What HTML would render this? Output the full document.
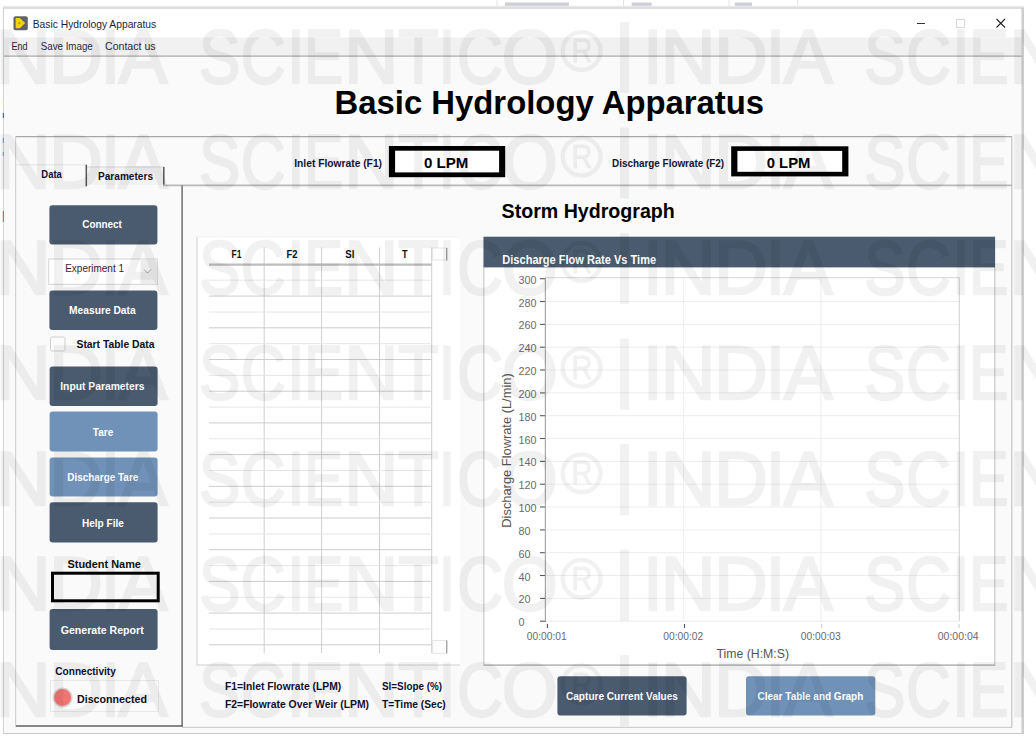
<!DOCTYPE html>
<html><head><meta charset="utf-8"><title>Basic Hydrology Apparatus</title>
<style>html,body{margin:0;padding:0;background:#fff;}svg{display:block;font-family:"Liberation Sans", sans-serif;}</style></head>
<body><svg width="1036" height="746" viewBox="0 0 1036 746">
<rect x="0.00" y="0.00" width="1036.00" height="746.00" fill="#ffffff" />
<rect x="505.00" y="2.50" width="64.00" height="4.00" fill="#cdd0da" />
<rect x="631.60" y="2.50" width="20.00" height="4.00" fill="#cdd0da" />
<rect x="734.70" y="2.50" width="17.30" height="4.00" fill="#cdd0da" />
<line x1="497" y1="0" x2="497" y2="9" stroke="#e2e2e2" stroke-width="1" />
<line x1="623.5" y1="0" x2="623.5" y2="9" stroke="#e2e2e2" stroke-width="1" />
<line x1="729" y1="0" x2="729" y2="9" stroke="#e2e2e2" stroke-width="1" />
<line x1="797.6" y1="0" x2="797.6" y2="9" stroke="#e2e2e2" stroke-width="1" />
<rect x="3.00" y="5.80" width="1021.00" height="3.70" fill="#ebebeb" />
<rect x="3.00" y="6.80" width="1021.00" height="2.00" fill="#dedede" />
<rect x="3.00" y="9.00" width="1020.00" height="725.00" fill="#ffffff" />
<line x1="3.5" y1="8" x2="3.5" y2="734" stroke="#d4d4d4" stroke-width="1.2" />
<line x1="1022.5" y1="8" x2="1022.5" y2="734" stroke="#cdcdcd" stroke-width="3" />
<line x1="3" y1="733.5" x2="1024" y2="733.5" stroke="#c9c9c9" stroke-width="1.2" />
<rect x="2.80" y="101.00" width="1.60" height="5.00" fill="#e8e4a0" />
<rect x="2.80" y="113.00" width="1.60" height="5.00" fill="#4a6a9a" />
<rect x="2.80" y="138.00" width="1.60" height="5.00" fill="#7aa0d0" />
<rect x="2.80" y="152.00" width="1.60" height="4.00" fill="#7aa0d0" />
<rect x="2.80" y="211.00" width="1.60" height="11.00" fill="#b07060" />
<rect x="4.00" y="9.20" width="1017.50" height="28.30" fill="#ffffff" />
<rect x="13.5" y="16.2" width="14.3" height="14" rx="2" fill="#616168"/>
<path d="M15.6 18 L19.8 18 L25.2 23.1 L19.8 28.2 L15.6 28.2 Z" fill="#f2d300"/>
<circle cx="19.3" cy="23.1" r="1.1" fill="#b09a10"/>
<text x="32.72" y="27.8" font-size="11.5" font-weight="normal" fill="#1d1d3a" textLength="123.50" lengthAdjust="spacingAndGlyphs" >Basic Hydrology Apparatus</text>
<line x1="917" y1="23.5" x2="925" y2="23.5" stroke="#333" stroke-width="1" />
<rect x="956.5" y="19.5" width="8" height="8" fill="none" stroke="#d8d8d8" stroke-width="1"/>
<line x1="996.5" y1="19" x2="1005" y2="27.5" stroke="#222" stroke-width="1.1" />
<line x1="1005" y1="19" x2="996.5" y2="27.5" stroke="#222" stroke-width="1.1" />
<rect x="4.00" y="37.50" width="1017.50" height="18.50" fill="#f1f1f1" />
<text x="11.56" y="49.8" font-size="11.5" font-weight="normal" fill="#3a1a3a" textLength="16.10" lengthAdjust="spacingAndGlyphs" >End</text>
<text x="40.72" y="49.8" font-size="11.5" font-weight="normal" fill="#2a2a3a" textLength="52.06" lengthAdjust="spacingAndGlyphs" >Save Image</text>
<text x="105.00" y="49.8" font-size="11.5" font-weight="normal" fill="#2a2a3a" textLength="50.56" lengthAdjust="spacingAndGlyphs" >Contact us</text>
<line x1="4" y1="56.1" x2="1021.5" y2="56.1" stroke="#aaaaaa" stroke-width="1.3" />
<rect x="4.00" y="57.00" width="1017.50" height="676.00" fill="#fafafa" />
<text x="334.54" y="113.8" font-size="32.5" font-weight="bold" fill="#000" textLength="429.58" lengthAdjust="spacingAndGlyphs" >Basic Hydrology Apparatus</text>
<line x1="15.5" y1="136.7" x2="1012" y2="136.7" stroke="#a8a8a8" stroke-width="1.3" />
<line x1="15.6" y1="136.7" x2="15.6" y2="727" stroke="#d2d2d2" stroke-width="1.2" />
<line x1="1011.8" y1="136.7" x2="1011.8" y2="727.5" stroke="#c4c4c4" stroke-width="1.2" />
<line x1="182" y1="727.3" x2="1012" y2="727.3" stroke="#cfcfcf" stroke-width="1.2" />
<text x="294.22" y="167.4" font-size="10" font-weight="bold" fill="#141438" textLength="87.78" lengthAdjust="spacingAndGlyphs" >Inlet Flowrate (F1)</text>
<rect x="388.90" y="146.00" width="116.30" height="31.20" fill="#000" />
<rect x="395.10" y="150.70" width="104.00" height="21.70" fill="#fff" />
<text x="424.00" y="168.3" font-size="15.5" font-weight="bold" fill="#000" textLength="44.44" lengthAdjust="spacingAndGlyphs" >0 LPM</text>
<text x="612.00" y="167.4" font-size="10" font-weight="bold" fill="#141438" textLength="112.16" lengthAdjust="spacingAndGlyphs" >Discharge Flowrate (F2)</text>
<rect x="731.20" y="146.30" width="117.20" height="30.10" fill="#000" />
<rect x="737.40" y="150.90" width="104.80" height="20.90" fill="#fff" />
<text x="766.72" y="168.3" font-size="15.5" font-weight="bold" fill="#000" textLength="43.72" lengthAdjust="spacingAndGlyphs" >0 LPM</text>
<line x1="15.5" y1="164.8" x2="86" y2="164.8" stroke="#e4e4e4" stroke-width="1" />
<rect x="86.50" y="167.00" width="77.00" height="18.00" fill="#f3f3f3" />
<line x1="86" y1="167" x2="164" y2="167" stroke="#d6d6d6" stroke-width="1" />
<line x1="86.3" y1="164.7" x2="86.3" y2="186.3" stroke="#555" stroke-width="1.5" />
<line x1="163.8" y1="167" x2="163.8" y2="185.5" stroke="#555" stroke-width="1.5" />
<text x="41.34" y="177.6" font-size="10.5" font-weight="bold" fill="#101030" textLength="20.54" lengthAdjust="spacingAndGlyphs" >Data</text>
<text x="98.00" y="180.0" font-size="10.5" font-weight="bold" fill="#101030" textLength="55.00" lengthAdjust="spacingAndGlyphs" >Parameters</text>
<line x1="163" y1="185.3" x2="1012" y2="185.3" stroke="#b8b8b8" stroke-width="1.8" />
<line x1="182.1" y1="185.5" x2="182.1" y2="726.5" stroke="#707070" stroke-width="1.5" />
<line x1="16" y1="725.9" x2="182.8" y2="725.9" stroke="#606060" stroke-width="1.5" />
<rect x="49.4" y="205.2" width="108.0" height="39.3" rx="3" fill="#4a5a6f"/>
<text x="82.22" y="228.4" font-size="11" font-weight="bold" fill="#ffffff" textLength="39.66" lengthAdjust="spacingAndGlyphs" >Connect</text>
<rect x="48.7" y="259" width="108.6" height="25.3" fill="#ffffff" stroke="#d4d4d4" stroke-width="1"/>
<rect x="140.50" y="259.50" width="16.50" height="24.50" fill="#ececec" />
<path d="M144 269.5 L147.5 273 L151 269.5" fill="none" stroke="#9a9a9a" stroke-width="1"/>
<text x="65.22" y="272.4" font-size="11" font-weight="normal" fill="#3a1a3a" textLength="58.78" lengthAdjust="spacingAndGlyphs" >Experiment 1</text>
<rect x="49.4" y="290.6" width="108.0" height="39.4" rx="3" fill="#4a5a6f"/>
<text x="69.06" y="314.0" font-size="11" font-weight="bold" fill="#ffffff" textLength="66.60" lengthAdjust="spacingAndGlyphs" >Measure Data</text>
<rect x="50.5" y="337" width="14.5" height="14" rx="1.5" fill="#fbfbfb" stroke="#d0d0d0" stroke-width="1"/>
<text x="76.50" y="348.0" font-size="11" font-weight="bold" fill="#101010" textLength="78.00" lengthAdjust="spacingAndGlyphs" >Start Table Data</text>
<rect x="49.6" y="366.5" width="108.0" height="39.5" rx="3" fill="#4a5a6f"/>
<text x="60.22" y="390.0" font-size="11" font-weight="bold" fill="#ffffff" textLength="84.28" lengthAdjust="spacingAndGlyphs" >Input Parameters</text>
<rect x="49.6" y="411.6" width="108.0" height="39.8" rx="3" fill="#7192b8"/>
<text x="92.84" y="435.5" font-size="11" font-weight="bold" fill="#ffffff" textLength="20.38" lengthAdjust="spacingAndGlyphs" >Tare</text>
<rect x="49.6" y="457.5" width="108.0" height="39.0" rx="3" fill="#7192b8"/>
<text x="67.34" y="481.0" font-size="11" font-weight="bold" fill="#ffffff" textLength="70.94" lengthAdjust="spacingAndGlyphs" >Discharge Tare</text>
<rect x="49.6" y="502.3" width="108.0" height="40.1" rx="3" fill="#4a5a6f"/>
<text x="82.00" y="526.5" font-size="11" font-weight="bold" fill="#ffffff" textLength="41.78" lengthAdjust="spacingAndGlyphs" >Help File</text>
<text x="67.50" y="568.0" font-size="11" font-weight="bold" fill="#101010" textLength="73.44" lengthAdjust="spacingAndGlyphs" >Student  Name</text>
<rect x="52.5" y="573.2" width="105.7" height="27.6" fill="#fafafa" stroke="#000" stroke-width="3"/>
<rect x="49.6" y="609" width="108.0" height="41.0" rx="3" fill="#4a5a6f"/>
<text x="60.72" y="633.5" font-size="11" font-weight="bold" fill="#ffffff" textLength="83.00" lengthAdjust="spacingAndGlyphs" >Generate Report</text>
<text x="55.34" y="675.0" font-size="11" font-weight="bold" fill="#101030" textLength="60.44" lengthAdjust="spacingAndGlyphs" >Connectivity</text>
<rect x="50.5" y="680.5" width="108" height="31" fill="none" stroke="#e8e8e8" stroke-width="1"/>
<circle cx="62.6" cy="697.6" r="9.3" fill="#f07474" stroke="#d6d6d6" stroke-width="1.6"/>
<text x="77.00" y="702.8" font-size="11.5" font-weight="bold" fill="#101020" textLength="70.00" lengthAdjust="spacingAndGlyphs" >Disconnected</text>
<rect x="196.60" y="236.60" width="263.40" height="428.70" fill="#ffffff" />
<line x1="197" y1="236.6" x2="197" y2="665.3" stroke="#cfcfcf" stroke-width="1" />
<line x1="196.6" y1="236.9" x2="460" y2="236.9" stroke="#f0f0f0" stroke-width="1" />
<line x1="196.6" y1="665" x2="460" y2="665" stroke="#d0d0d0" stroke-width="1.2" />
<line x1="264.2" y1="247.5" x2="264.2" y2="653.3" stroke="#cfcfcf" stroke-width="1" />
<line x1="321.6" y1="247.5" x2="321.6" y2="653.3" stroke="#cfcfcf" stroke-width="1" />
<line x1="379.5" y1="247.5" x2="379.5" y2="653.3" stroke="#cfcfcf" stroke-width="1" />
<line x1="431.7" y1="247.5" x2="431.7" y2="653.3" stroke="#cfcfcf" stroke-width="1" />
<line x1="209" y1="264.6" x2="431.7" y2="264.6" stroke="#bdbdbd" stroke-width="2.2" />
<line x1="209" y1="280.2" x2="431.7" y2="280.2" stroke="#e6e6e6" stroke-width="1" />
<line x1="209" y1="296.1" x2="431.7" y2="296.1" stroke="#cdcdcd" stroke-width="1" />
<line x1="209" y1="312.0" x2="431.7" y2="312.0" stroke="#e6e6e6" stroke-width="1" />
<line x1="209" y1="327.8" x2="431.7" y2="327.8" stroke="#cdcdcd" stroke-width="1" />
<line x1="209" y1="343.7" x2="431.7" y2="343.7" stroke="#e6e6e6" stroke-width="1" />
<line x1="209" y1="359.5" x2="431.7" y2="359.5" stroke="#cdcdcd" stroke-width="1" />
<line x1="209" y1="375.4" x2="431.7" y2="375.4" stroke="#e6e6e6" stroke-width="1" />
<line x1="209" y1="391.2" x2="431.7" y2="391.2" stroke="#cdcdcd" stroke-width="1" />
<line x1="209" y1="407.1" x2="431.7" y2="407.1" stroke="#e6e6e6" stroke-width="1" />
<line x1="209" y1="422.9" x2="431.7" y2="422.9" stroke="#cdcdcd" stroke-width="1" />
<line x1="209" y1="438.8" x2="431.7" y2="438.8" stroke="#e6e6e6" stroke-width="1" />
<line x1="209" y1="454.6" x2="431.7" y2="454.6" stroke="#cdcdcd" stroke-width="1" />
<line x1="209" y1="470.5" x2="431.7" y2="470.5" stroke="#e6e6e6" stroke-width="1" />
<line x1="209" y1="486.3" x2="431.7" y2="486.3" stroke="#cdcdcd" stroke-width="1" />
<line x1="209" y1="502.2" x2="431.7" y2="502.2" stroke="#e6e6e6" stroke-width="1" />
<line x1="209" y1="518.0" x2="431.7" y2="518.0" stroke="#cdcdcd" stroke-width="1" />
<line x1="209" y1="533.9" x2="431.7" y2="533.9" stroke="#e6e6e6" stroke-width="1" />
<line x1="209" y1="549.7" x2="431.7" y2="549.7" stroke="#cdcdcd" stroke-width="1" />
<line x1="209" y1="565.6" x2="431.7" y2="565.6" stroke="#e6e6e6" stroke-width="1" />
<line x1="209" y1="581.4" x2="431.7" y2="581.4" stroke="#cdcdcd" stroke-width="1" />
<line x1="209" y1="597.3" x2="431.7" y2="597.3" stroke="#e6e6e6" stroke-width="1" />
<line x1="209" y1="613.1" x2="431.7" y2="613.1" stroke="#cdcdcd" stroke-width="1" />
<line x1="209" y1="629.0" x2="431.7" y2="629.0" stroke="#e6e6e6" stroke-width="1" />
<line x1="209" y1="644.8" x2="431.7" y2="644.8" stroke="#cdcdcd" stroke-width="1" />
<rect x="432.7" y="248" width="14" height="12" fill="#fdfdfd" stroke="#e0e0e0" stroke-width="0.8"/>
<line x1="446.8" y1="248" x2="446.8" y2="260.5" stroke="#888" stroke-width="1" />
<rect x="432.7" y="640.5" width="14" height="12.8" fill="#fdfdfd" stroke="#e0e0e0" stroke-width="0.8"/>
<line x1="446.8" y1="640.5" x2="446.8" y2="653.3" stroke="#888" stroke-width="1" />
<text x="231.50" y="258.0" font-size="10.5" font-weight="bold" fill="#101020" textLength="9.94" lengthAdjust="spacingAndGlyphs" >F1</text>
<text x="286.56" y="258.0" font-size="10.5" font-weight="bold" fill="#101020" textLength="10.94" lengthAdjust="spacingAndGlyphs" >F2</text>
<text x="345.34" y="258.0" font-size="10.5" font-weight="bold" fill="#101020" textLength="9.10" lengthAdjust="spacingAndGlyphs" >Sl</text>
<text x="402.00" y="258.0" font-size="10.5" font-weight="bold" fill="#101020" textLength="5.60" lengthAdjust="spacingAndGlyphs" >T</text>
<text x="225.00" y="690.0" font-size="10.5" font-weight="bold" fill="#101030" textLength="116.22" lengthAdjust="spacingAndGlyphs" >F1=Inlet Flowrate (LPM)</text>
<text x="225.00" y="708.0" font-size="10.5" font-weight="bold" fill="#101030" textLength="144.00" lengthAdjust="spacingAndGlyphs" >F2=Flowrate Over Weir (LPM)</text>
<text x="382.00" y="690.0" font-size="10.5" font-weight="bold" fill="#101030" textLength="60.00" lengthAdjust="spacingAndGlyphs" >Sl=Slope (%)</text>
<text x="382.00" y="708.0" font-size="10.5" font-weight="bold" fill="#101030" textLength="63.78" lengthAdjust="spacingAndGlyphs" >T=Time (Sec)</text>
<text x="501.56" y="217.6" font-size="19.5" font-weight="bold" fill="#000" textLength="173.28" lengthAdjust="spacingAndGlyphs" >Storm Hydrograph</text>
<rect x="483.60" y="236.70" width="511.40" height="428.90" fill="#ffffff" />
<line x1="483.8" y1="236.7" x2="483.8" y2="665.6" stroke="#c8c8c8" stroke-width="1.2" />
<line x1="994.8" y1="236.7" x2="994.8" y2="665.6" stroke="#c8c8c8" stroke-width="1.2" />
<line x1="483.6" y1="665.1" x2="995" y2="665.1" stroke="#bdbdbd" stroke-width="1.6" />
<rect x="483.60" y="236.70" width="511.40" height="30.70" fill="#4a5a6f" />
<text x="502.34" y="264.2" font-size="12" font-weight="bold" fill="#ffffff" textLength="153.82" lengthAdjust="spacingAndGlyphs" >Discharge Flow Rate Vs Time</text>
<line x1="540" y1="278.7" x2="546" y2="278.7" stroke="#5a5a5a" stroke-width="1.1" />
<text x="518.4" y="283.7" font-size="10.8" fill="#6a6a6a">300</text>
<line x1="546" y1="301.5" x2="959.3" y2="301.5" stroke="#ededed" stroke-width="1" />
<line x1="540" y1="301.5" x2="546" y2="301.5" stroke="#5a5a5a" stroke-width="1.1" />
<text x="518.4" y="306.5" font-size="10.8" fill="#6a6a6a">280</text>
<line x1="546" y1="324.4" x2="959.3" y2="324.4" stroke="#ededed" stroke-width="1" />
<line x1="540" y1="324.4" x2="546" y2="324.4" stroke="#5a5a5a" stroke-width="1.1" />
<text x="518.4" y="329.4" font-size="10.8" fill="#6a6a6a">260</text>
<line x1="546" y1="347.2" x2="959.3" y2="347.2" stroke="#ededed" stroke-width="1" />
<line x1="540" y1="347.2" x2="546" y2="347.2" stroke="#5a5a5a" stroke-width="1.1" />
<text x="518.4" y="352.2" font-size="10.8" fill="#6a6a6a">240</text>
<line x1="546" y1="370.0" x2="959.3" y2="370.0" stroke="#ededed" stroke-width="1" />
<line x1="540" y1="370.0" x2="546" y2="370.0" stroke="#5a5a5a" stroke-width="1.1" />
<text x="518.4" y="375.0" font-size="10.8" fill="#6a6a6a">220</text>
<line x1="546" y1="392.9" x2="959.3" y2="392.9" stroke="#ededed" stroke-width="1" />
<line x1="540" y1="392.9" x2="546" y2="392.9" stroke="#5a5a5a" stroke-width="1.1" />
<text x="518.4" y="397.9" font-size="10.8" fill="#6a6a6a">200</text>
<line x1="546" y1="415.7" x2="959.3" y2="415.7" stroke="#ededed" stroke-width="1" />
<line x1="540" y1="415.7" x2="546" y2="415.7" stroke="#5a5a5a" stroke-width="1.1" />
<text x="518.4" y="420.7" font-size="10.8" fill="#6a6a6a">180</text>
<line x1="546" y1="438.5" x2="959.3" y2="438.5" stroke="#ededed" stroke-width="1" />
<line x1="540" y1="438.5" x2="546" y2="438.5" stroke="#5a5a5a" stroke-width="1.1" />
<text x="518.4" y="443.5" font-size="10.8" fill="#6a6a6a">160</text>
<line x1="546" y1="461.4" x2="959.3" y2="461.4" stroke="#ededed" stroke-width="1" />
<line x1="540" y1="461.4" x2="546" y2="461.4" stroke="#5a5a5a" stroke-width="1.1" />
<text x="518.4" y="466.4" font-size="10.8" fill="#6a6a6a">140</text>
<line x1="546" y1="484.2" x2="959.3" y2="484.2" stroke="#ededed" stroke-width="1" />
<line x1="540" y1="484.2" x2="546" y2="484.2" stroke="#5a5a5a" stroke-width="1.1" />
<text x="518.4" y="489.2" font-size="10.8" fill="#6a6a6a">120</text>
<line x1="546" y1="507.0" x2="959.3" y2="507.0" stroke="#ededed" stroke-width="1" />
<line x1="540" y1="507.0" x2="546" y2="507.0" stroke="#5a5a5a" stroke-width="1.1" />
<text x="518.4" y="512.0" font-size="10.8" fill="#6a6a6a">100</text>
<line x1="546" y1="529.9" x2="959.3" y2="529.9" stroke="#ededed" stroke-width="1" />
<line x1="540" y1="529.9" x2="546" y2="529.9" stroke="#5a5a5a" stroke-width="1.1" />
<text x="518.4" y="534.9" font-size="10.8" fill="#6a6a6a">80</text>
<line x1="546" y1="552.7" x2="959.3" y2="552.7" stroke="#ededed" stroke-width="1" />
<line x1="540" y1="552.7" x2="546" y2="552.7" stroke="#5a5a5a" stroke-width="1.1" />
<text x="518.4" y="557.7" font-size="10.8" fill="#6a6a6a">60</text>
<line x1="546" y1="575.5" x2="959.3" y2="575.5" stroke="#ededed" stroke-width="1" />
<line x1="540" y1="575.5" x2="546" y2="575.5" stroke="#5a5a5a" stroke-width="1.1" />
<text x="518.4" y="580.5" font-size="10.8" fill="#6a6a6a">40</text>
<line x1="546" y1="598.4" x2="959.3" y2="598.4" stroke="#ededed" stroke-width="1" />
<line x1="540" y1="598.4" x2="546" y2="598.4" stroke="#5a5a5a" stroke-width="1.1" />
<text x="518.4" y="603.4" font-size="10.8" fill="#6a6a6a">20</text>
<line x1="540" y1="621.2" x2="546" y2="621.2" stroke="#5a5a5a" stroke-width="1.1" />
<text x="518.4" y="626.2" font-size="10.8" fill="#6a6a6a">0</text>
<line x1="546" y1="277.7" x2="959.3" y2="277.7" stroke="#d6d6d6" stroke-width="1" />
<line x1="959.3" y1="277.7" x2="959.3" y2="621.2" stroke="#cfcfcf" stroke-width="1" />
<line x1="547.4" y1="624.0" x2="547.4" y2="628.0" stroke="#555" stroke-width="1.1" />
<text x="526.84" y="640.0" font-size="10.5" font-weight="normal" fill="#6a6a6a" textLength="39.94" lengthAdjust="spacingAndGlyphs" >00:00:01</text>
<line x1="683.7" y1="278.7" x2="683.7" y2="621.2" stroke="#ededed" stroke-width="1" />
<line x1="684.5" y1="624.0" x2="684.5" y2="628.0" stroke="#555" stroke-width="1.1" />
<text x="663.22" y="640.0" font-size="10.5" font-weight="normal" fill="#6a6a6a" textLength="39.94" lengthAdjust="spacingAndGlyphs" >00:00:02</text>
<line x1="820.9" y1="278.7" x2="820.9" y2="621.2" stroke="#ededed" stroke-width="1" />
<line x1="821.6999999999999" y1="624.0" x2="821.6999999999999" y2="628.0" stroke="#d0d0d0" stroke-width="1.1" />
<text x="800.78" y="640.0" font-size="10.5" font-weight="normal" fill="#6a6a6a" textLength="39.94" lengthAdjust="spacingAndGlyphs" >00:00:03</text>
<line x1="959.0" y1="624.0" x2="959.0" y2="628.0" stroke="#d0d0d0" stroke-width="1.1" />
<text x="937.72" y="640.0" font-size="10.5" font-weight="normal" fill="#6a6a6a" textLength="40.84" lengthAdjust="spacingAndGlyphs" >00:00:04</text>
<line x1="545.4" y1="277.7" x2="545.4" y2="621.2" stroke="#a8a8a8" stroke-width="1.2" />
<line x1="546" y1="621.2" x2="959.3" y2="621.2" stroke="#ececec" stroke-width="1" />
<text x="716.56" y="657.5" font-size="12" font-weight="normal" fill="#555" textLength="72.44" lengthAdjust="spacingAndGlyphs" >Time (H:M:S)</text>
<text x="0" y="0" font-size="12" fill="#555" textLength="154.4" lengthAdjust="spacingAndGlyphs" transform="translate(510.6,527.7) rotate(-90)">Discharge Flowrate (L/min)</text>
<rect x="557.4" y="676.3" width="129.2" height="39.3" rx="3" fill="#4a5a6f"/>
<text x="566.00" y="699.6" font-size="11" font-weight="bold" fill="#ffffff" textLength="111.94" lengthAdjust="spacingAndGlyphs" >Capture Current Values</text>
<rect x="746" y="676.3" width="129.3" height="39.3" rx="3" fill="#7192b8"/>
<text x="757.56" y="699.6" font-size="11" font-weight="bold" fill="#ffffff" textLength="105.72" lengthAdjust="spacingAndGlyphs" >Clear Table and Graph</text>
<g opacity="0.058" fill="#000" stroke="#000" stroke-width="2.3">
<text transform="translate(-4.58,82.65) scale(1.013,1)" font-size="75.65217391304348">N</text>
<text transform="translate(48.88,82.65) scale(0.986,1)" font-size="75.65217391304348">D</text>
<text transform="translate(100.65,82.65) scale(0.925,1)" font-size="75.65217391304348">I</text>
<text transform="translate(118.55,82.65) scale(0.973,1)" font-size="75.65217391304348">A</text>
<rect x="-45.2" y="21.9" width="9" height="71" stroke="none"/>
<text transform="translate(199.06,82.65) scale(0.816,1)" font-size="75.65217391304348">S</text>
<text transform="translate(240.85,82.65) scale(0.820,1)" font-size="75.65217391304348">C</text>
<text transform="translate(287.17,82.65) scale(0.820,1)" font-size="75.65217391304348">I</text>
<text transform="translate(303.95,82.65) scale(0.776,1)" font-size="75.65217391304348">E</text>
<text transform="translate(344.11,82.65) scale(0.998,1)" font-size="75.65217391304348">N</text>
<text transform="translate(398.02,82.65) scale(0.881,1)" font-size="75.65217391304348">T</text>
<text transform="translate(438.84,82.65) scale(0.780,1)" font-size="75.65217391304348">I</text>
<text transform="translate(456.97,82.65) scale(0.841,1)" font-size="75.65217391304348">C</text>
<text transform="translate(501.85,82.65) scale(0.953,1)" font-size="75.65217391304348">O</text>
<text transform="translate(643.05,82.65) scale(0.925,1)" font-size="75.65217391304348">I</text>
<text transform="translate(660.62,82.65) scale(1.013,1)" font-size="75.65217391304348">N</text>
<text transform="translate(714.08,82.65) scale(0.986,1)" font-size="75.65217391304348">D</text>
<text transform="translate(765.85,82.65) scale(0.925,1)" font-size="75.65217391304348">I</text>
<text transform="translate(783.75,82.65) scale(0.973,1)" font-size="75.65217391304348">A</text>
<circle cx="581.6" cy="51.0" r="18.9" fill="none" stroke-width="4.4"/>
<text transform="translate(571.48,62.25) scale(0.889,1)" font-size="32.6" stroke-width="1">R</text>
<rect x="620.0" y="21.9" width="9" height="71" stroke="none"/>
<text transform="translate(864.26,82.65) scale(0.816,1)" font-size="75.65217391304348">S</text>
<text transform="translate(906.05,82.65) scale(0.820,1)" font-size="75.65217391304348">C</text>
<text transform="translate(952.37,82.65) scale(0.820,1)" font-size="75.65217391304348">I</text>
<text transform="translate(969.15,82.65) scale(0.776,1)" font-size="75.65217391304348">E</text>
<text transform="translate(1009.31,82.65) scale(0.998,1)" font-size="75.65217391304348">N</text>
<rect x="1285.2" y="21.9" width="9" height="71" stroke="none"/>
<text transform="translate(-4.58,188.20) scale(1.013,1)" font-size="75.65217391304348">N</text>
<text transform="translate(48.88,188.20) scale(0.986,1)" font-size="75.65217391304348">D</text>
<text transform="translate(100.65,188.20) scale(0.925,1)" font-size="75.65217391304348">I</text>
<text transform="translate(118.55,188.20) scale(0.973,1)" font-size="75.65217391304348">A</text>
<rect x="-45.2" y="127.5" width="9" height="71" stroke="none"/>
<text transform="translate(199.06,188.20) scale(0.816,1)" font-size="75.65217391304348">S</text>
<text transform="translate(240.85,188.20) scale(0.820,1)" font-size="75.65217391304348">C</text>
<text transform="translate(287.17,188.20) scale(0.820,1)" font-size="75.65217391304348">I</text>
<text transform="translate(303.95,188.20) scale(0.776,1)" font-size="75.65217391304348">E</text>
<text transform="translate(344.11,188.20) scale(0.998,1)" font-size="75.65217391304348">N</text>
<text transform="translate(398.02,188.20) scale(0.881,1)" font-size="75.65217391304348">T</text>
<text transform="translate(438.84,188.20) scale(0.780,1)" font-size="75.65217391304348">I</text>
<text transform="translate(456.97,188.20) scale(0.841,1)" font-size="75.65217391304348">C</text>
<text transform="translate(501.85,188.20) scale(0.953,1)" font-size="75.65217391304348">O</text>
<text transform="translate(643.05,188.20) scale(0.925,1)" font-size="75.65217391304348">I</text>
<text transform="translate(660.62,188.20) scale(1.013,1)" font-size="75.65217391304348">N</text>
<text transform="translate(714.08,188.20) scale(0.986,1)" font-size="75.65217391304348">D</text>
<text transform="translate(765.85,188.20) scale(0.925,1)" font-size="75.65217391304348">I</text>
<text transform="translate(783.75,188.20) scale(0.973,1)" font-size="75.65217391304348">A</text>
<circle cx="581.6" cy="156.6" r="18.9" fill="none" stroke-width="4.4"/>
<text transform="translate(571.48,167.80) scale(0.889,1)" font-size="32.6" stroke-width="1">R</text>
<rect x="620.0" y="127.5" width="9" height="71" stroke="none"/>
<text transform="translate(864.26,188.20) scale(0.816,1)" font-size="75.65217391304348">S</text>
<text transform="translate(906.05,188.20) scale(0.820,1)" font-size="75.65217391304348">C</text>
<text transform="translate(952.37,188.20) scale(0.820,1)" font-size="75.65217391304348">I</text>
<text transform="translate(969.15,188.20) scale(0.776,1)" font-size="75.65217391304348">E</text>
<text transform="translate(1009.31,188.20) scale(0.998,1)" font-size="75.65217391304348">N</text>
<rect x="1285.2" y="127.5" width="9" height="71" stroke="none"/>
<text transform="translate(-4.58,293.75) scale(1.013,1)" font-size="75.65217391304348">N</text>
<text transform="translate(48.88,293.75) scale(0.986,1)" font-size="75.65217391304348">D</text>
<text transform="translate(100.65,293.75) scale(0.925,1)" font-size="75.65217391304348">I</text>
<text transform="translate(118.55,293.75) scale(0.973,1)" font-size="75.65217391304348">A</text>
<rect x="-45.2" y="233.1" width="9" height="71" stroke="none"/>
<text transform="translate(199.06,293.75) scale(0.816,1)" font-size="75.65217391304348">S</text>
<text transform="translate(240.85,293.75) scale(0.820,1)" font-size="75.65217391304348">C</text>
<text transform="translate(287.17,293.75) scale(0.820,1)" font-size="75.65217391304348">I</text>
<text transform="translate(303.95,293.75) scale(0.776,1)" font-size="75.65217391304348">E</text>
<text transform="translate(344.11,293.75) scale(0.998,1)" font-size="75.65217391304348">N</text>
<text transform="translate(398.02,293.75) scale(0.881,1)" font-size="75.65217391304348">T</text>
<text transform="translate(438.84,293.75) scale(0.780,1)" font-size="75.65217391304348">I</text>
<text transform="translate(456.97,293.75) scale(0.841,1)" font-size="75.65217391304348">C</text>
<text transform="translate(501.85,293.75) scale(0.953,1)" font-size="75.65217391304348">O</text>
<text transform="translate(643.05,293.75) scale(0.925,1)" font-size="75.65217391304348">I</text>
<text transform="translate(660.62,293.75) scale(1.013,1)" font-size="75.65217391304348">N</text>
<text transform="translate(714.08,293.75) scale(0.986,1)" font-size="75.65217391304348">D</text>
<text transform="translate(765.85,293.75) scale(0.925,1)" font-size="75.65217391304348">I</text>
<text transform="translate(783.75,293.75) scale(0.973,1)" font-size="75.65217391304348">A</text>
<circle cx="581.6" cy="262.2" r="18.9" fill="none" stroke-width="4.4"/>
<text transform="translate(571.48,273.35) scale(0.889,1)" font-size="32.6" stroke-width="1">R</text>
<rect x="620.0" y="233.1" width="9" height="71" stroke="none"/>
<text transform="translate(864.26,293.75) scale(0.816,1)" font-size="75.65217391304348">S</text>
<text transform="translate(906.05,293.75) scale(0.820,1)" font-size="75.65217391304348">C</text>
<text transform="translate(952.37,293.75) scale(0.820,1)" font-size="75.65217391304348">I</text>
<text transform="translate(969.15,293.75) scale(0.776,1)" font-size="75.65217391304348">E</text>
<text transform="translate(1009.31,293.75) scale(0.998,1)" font-size="75.65217391304348">N</text>
<rect x="1285.2" y="233.1" width="9" height="71" stroke="none"/>
<text transform="translate(-4.58,399.30) scale(1.013,1)" font-size="75.65217391304348">N</text>
<text transform="translate(48.88,399.30) scale(0.986,1)" font-size="75.65217391304348">D</text>
<text transform="translate(100.65,399.30) scale(0.925,1)" font-size="75.65217391304348">I</text>
<text transform="translate(118.55,399.30) scale(0.973,1)" font-size="75.65217391304348">A</text>
<rect x="-45.2" y="338.6" width="9" height="71" stroke="none"/>
<text transform="translate(199.06,399.30) scale(0.816,1)" font-size="75.65217391304348">S</text>
<text transform="translate(240.85,399.30) scale(0.820,1)" font-size="75.65217391304348">C</text>
<text transform="translate(287.17,399.30) scale(0.820,1)" font-size="75.65217391304348">I</text>
<text transform="translate(303.95,399.30) scale(0.776,1)" font-size="75.65217391304348">E</text>
<text transform="translate(344.11,399.30) scale(0.998,1)" font-size="75.65217391304348">N</text>
<text transform="translate(398.02,399.30) scale(0.881,1)" font-size="75.65217391304348">T</text>
<text transform="translate(438.84,399.30) scale(0.780,1)" font-size="75.65217391304348">I</text>
<text transform="translate(456.97,399.30) scale(0.841,1)" font-size="75.65217391304348">C</text>
<text transform="translate(501.85,399.30) scale(0.953,1)" font-size="75.65217391304348">O</text>
<text transform="translate(643.05,399.30) scale(0.925,1)" font-size="75.65217391304348">I</text>
<text transform="translate(660.62,399.30) scale(1.013,1)" font-size="75.65217391304348">N</text>
<text transform="translate(714.08,399.30) scale(0.986,1)" font-size="75.65217391304348">D</text>
<text transform="translate(765.85,399.30) scale(0.925,1)" font-size="75.65217391304348">I</text>
<text transform="translate(783.75,399.30) scale(0.973,1)" font-size="75.65217391304348">A</text>
<circle cx="581.6" cy="367.7" r="18.9" fill="none" stroke-width="4.4"/>
<text transform="translate(571.48,378.90) scale(0.889,1)" font-size="32.6" stroke-width="1">R</text>
<rect x="620.0" y="338.6" width="9" height="71" stroke="none"/>
<text transform="translate(864.26,399.30) scale(0.816,1)" font-size="75.65217391304348">S</text>
<text transform="translate(906.05,399.30) scale(0.820,1)" font-size="75.65217391304348">C</text>
<text transform="translate(952.37,399.30) scale(0.820,1)" font-size="75.65217391304348">I</text>
<text transform="translate(969.15,399.30) scale(0.776,1)" font-size="75.65217391304348">E</text>
<text transform="translate(1009.31,399.30) scale(0.998,1)" font-size="75.65217391304348">N</text>
<rect x="1285.2" y="338.6" width="9" height="71" stroke="none"/>
<text transform="translate(-4.58,504.85) scale(1.013,1)" font-size="75.65217391304348">N</text>
<text transform="translate(48.88,504.85) scale(0.986,1)" font-size="75.65217391304348">D</text>
<text transform="translate(100.65,504.85) scale(0.925,1)" font-size="75.65217391304348">I</text>
<text transform="translate(118.55,504.85) scale(0.973,1)" font-size="75.65217391304348">A</text>
<rect x="-45.2" y="444.2" width="9" height="71" stroke="none"/>
<text transform="translate(199.06,504.85) scale(0.816,1)" font-size="75.65217391304348">S</text>
<text transform="translate(240.85,504.85) scale(0.820,1)" font-size="75.65217391304348">C</text>
<text transform="translate(287.17,504.85) scale(0.820,1)" font-size="75.65217391304348">I</text>
<text transform="translate(303.95,504.85) scale(0.776,1)" font-size="75.65217391304348">E</text>
<text transform="translate(344.11,504.85) scale(0.998,1)" font-size="75.65217391304348">N</text>
<text transform="translate(398.02,504.85) scale(0.881,1)" font-size="75.65217391304348">T</text>
<text transform="translate(438.84,504.85) scale(0.780,1)" font-size="75.65217391304348">I</text>
<text transform="translate(456.97,504.85) scale(0.841,1)" font-size="75.65217391304348">C</text>
<text transform="translate(501.85,504.85) scale(0.953,1)" font-size="75.65217391304348">O</text>
<text transform="translate(643.05,504.85) scale(0.925,1)" font-size="75.65217391304348">I</text>
<text transform="translate(660.62,504.85) scale(1.013,1)" font-size="75.65217391304348">N</text>
<text transform="translate(714.08,504.85) scale(0.986,1)" font-size="75.65217391304348">D</text>
<text transform="translate(765.85,504.85) scale(0.925,1)" font-size="75.65217391304348">I</text>
<text transform="translate(783.75,504.85) scale(0.973,1)" font-size="75.65217391304348">A</text>
<circle cx="581.6" cy="473.3" r="18.9" fill="none" stroke-width="4.4"/>
<text transform="translate(571.48,484.45) scale(0.889,1)" font-size="32.6" stroke-width="1">R</text>
<rect x="620.0" y="444.2" width="9" height="71" stroke="none"/>
<text transform="translate(864.26,504.85) scale(0.816,1)" font-size="75.65217391304348">S</text>
<text transform="translate(906.05,504.85) scale(0.820,1)" font-size="75.65217391304348">C</text>
<text transform="translate(952.37,504.85) scale(0.820,1)" font-size="75.65217391304348">I</text>
<text transform="translate(969.15,504.85) scale(0.776,1)" font-size="75.65217391304348">E</text>
<text transform="translate(1009.31,504.85) scale(0.998,1)" font-size="75.65217391304348">N</text>
<rect x="1285.2" y="444.2" width="9" height="71" stroke="none"/>
<text transform="translate(-4.58,610.40) scale(1.013,1)" font-size="75.65217391304348">N</text>
<text transform="translate(48.88,610.40) scale(0.986,1)" font-size="75.65217391304348">D</text>
<text transform="translate(100.65,610.40) scale(0.925,1)" font-size="75.65217391304348">I</text>
<text transform="translate(118.55,610.40) scale(0.973,1)" font-size="75.65217391304348">A</text>
<rect x="-45.2" y="549.7" width="9" height="71" stroke="none"/>
<text transform="translate(199.06,610.40) scale(0.816,1)" font-size="75.65217391304348">S</text>
<text transform="translate(240.85,610.40) scale(0.820,1)" font-size="75.65217391304348">C</text>
<text transform="translate(287.17,610.40) scale(0.820,1)" font-size="75.65217391304348">I</text>
<text transform="translate(303.95,610.40) scale(0.776,1)" font-size="75.65217391304348">E</text>
<text transform="translate(344.11,610.40) scale(0.998,1)" font-size="75.65217391304348">N</text>
<text transform="translate(398.02,610.40) scale(0.881,1)" font-size="75.65217391304348">T</text>
<text transform="translate(438.84,610.40) scale(0.780,1)" font-size="75.65217391304348">I</text>
<text transform="translate(456.97,610.40) scale(0.841,1)" font-size="75.65217391304348">C</text>
<text transform="translate(501.85,610.40) scale(0.953,1)" font-size="75.65217391304348">O</text>
<text transform="translate(643.05,610.40) scale(0.925,1)" font-size="75.65217391304348">I</text>
<text transform="translate(660.62,610.40) scale(1.013,1)" font-size="75.65217391304348">N</text>
<text transform="translate(714.08,610.40) scale(0.986,1)" font-size="75.65217391304348">D</text>
<text transform="translate(765.85,610.40) scale(0.925,1)" font-size="75.65217391304348">I</text>
<text transform="translate(783.75,610.40) scale(0.973,1)" font-size="75.65217391304348">A</text>
<circle cx="581.6" cy="578.8" r="18.9" fill="none" stroke-width="4.4"/>
<text transform="translate(571.48,590.00) scale(0.889,1)" font-size="32.6" stroke-width="1">R</text>
<rect x="620.0" y="549.7" width="9" height="71" stroke="none"/>
<text transform="translate(864.26,610.40) scale(0.816,1)" font-size="75.65217391304348">S</text>
<text transform="translate(906.05,610.40) scale(0.820,1)" font-size="75.65217391304348">C</text>
<text transform="translate(952.37,610.40) scale(0.820,1)" font-size="75.65217391304348">I</text>
<text transform="translate(969.15,610.40) scale(0.776,1)" font-size="75.65217391304348">E</text>
<text transform="translate(1009.31,610.40) scale(0.998,1)" font-size="75.65217391304348">N</text>
<rect x="1285.2" y="549.7" width="9" height="71" stroke="none"/>
<text transform="translate(-4.58,715.95) scale(1.013,1)" font-size="75.65217391304348">N</text>
<text transform="translate(48.88,715.95) scale(0.986,1)" font-size="75.65217391304348">D</text>
<text transform="translate(100.65,715.95) scale(0.925,1)" font-size="75.65217391304348">I</text>
<text transform="translate(118.55,715.95) scale(0.973,1)" font-size="75.65217391304348">A</text>
<rect x="-45.2" y="655.2" width="9" height="71" stroke="none"/>
<text transform="translate(199.06,715.95) scale(0.816,1)" font-size="75.65217391304348">S</text>
<text transform="translate(240.85,715.95) scale(0.820,1)" font-size="75.65217391304348">C</text>
<text transform="translate(287.17,715.95) scale(0.820,1)" font-size="75.65217391304348">I</text>
<text transform="translate(303.95,715.95) scale(0.776,1)" font-size="75.65217391304348">E</text>
<text transform="translate(344.11,715.95) scale(0.998,1)" font-size="75.65217391304348">N</text>
<text transform="translate(398.02,715.95) scale(0.881,1)" font-size="75.65217391304348">T</text>
<text transform="translate(438.84,715.95) scale(0.780,1)" font-size="75.65217391304348">I</text>
<text transform="translate(456.97,715.95) scale(0.841,1)" font-size="75.65217391304348">C</text>
<text transform="translate(501.85,715.95) scale(0.953,1)" font-size="75.65217391304348">O</text>
<text transform="translate(643.05,715.95) scale(0.925,1)" font-size="75.65217391304348">I</text>
<text transform="translate(660.62,715.95) scale(1.013,1)" font-size="75.65217391304348">N</text>
<text transform="translate(714.08,715.95) scale(0.986,1)" font-size="75.65217391304348">D</text>
<text transform="translate(765.85,715.95) scale(0.925,1)" font-size="75.65217391304348">I</text>
<text transform="translate(783.75,715.95) scale(0.973,1)" font-size="75.65217391304348">A</text>
<circle cx="581.6" cy="684.3" r="18.9" fill="none" stroke-width="4.4"/>
<text transform="translate(571.48,695.55) scale(0.889,1)" font-size="32.6" stroke-width="1">R</text>
<rect x="620.0" y="655.2" width="9" height="71" stroke="none"/>
<text transform="translate(864.26,715.95) scale(0.816,1)" font-size="75.65217391304348">S</text>
<text transform="translate(906.05,715.95) scale(0.820,1)" font-size="75.65217391304348">C</text>
<text transform="translate(952.37,715.95) scale(0.820,1)" font-size="75.65217391304348">I</text>
<text transform="translate(969.15,715.95) scale(0.776,1)" font-size="75.65217391304348">E</text>
<text transform="translate(1009.31,715.95) scale(0.998,1)" font-size="75.65217391304348">N</text>
<rect x="1285.2" y="655.2" width="9" height="71" stroke="none"/>
</g>
</svg></body></html>
